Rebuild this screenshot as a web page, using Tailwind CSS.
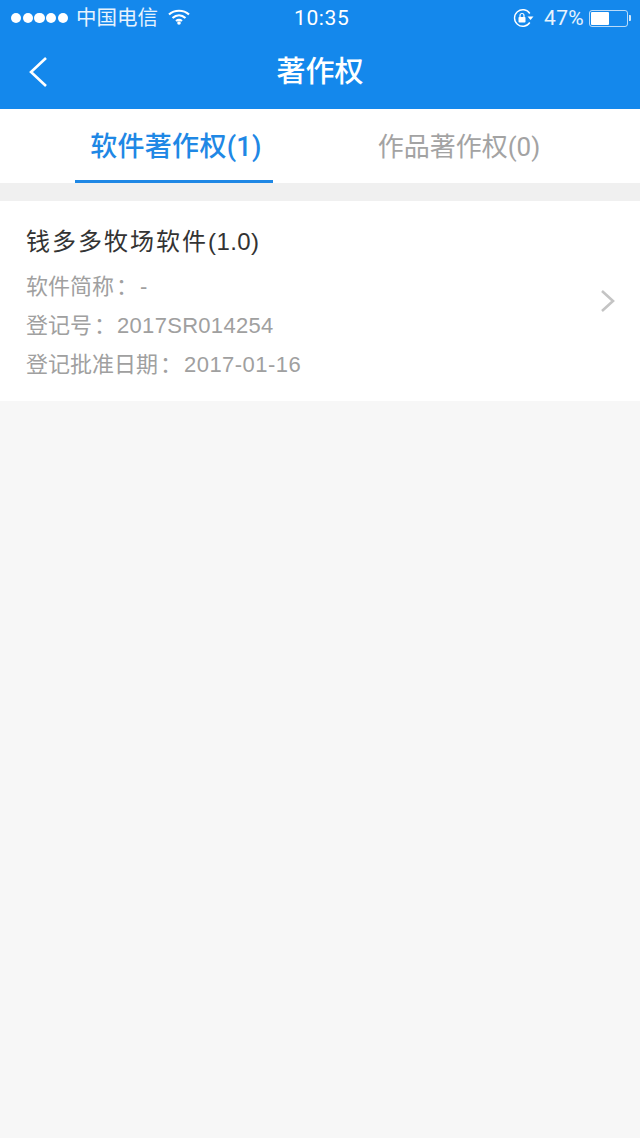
<!DOCTYPE html>
<html lang="zh-CN">
<head>
    <meta charset="UTF-8">
    <meta name="viewport" content="width=device-width, initial-scale=1.0">
    <title>著作权</title>
    <script src="https://cdn.jsdelivr.net/npm/@tailwindcss/browser@4"></script>
</head>
<body class="bg-[#f7f7f7] h-[1138px] overflow-hidden font-['Liberation_Sans','Noto_Sans_CJK_SC',sans-serif]">
    <!-- status bar + nav -->
    <header class="bg-[#1488ec] h-[109px] text-white">
        <div class="h-[36px] flex items-center justify-between pl-[11px] pr-[9px] relative">
            <div class="flex items-center">
                <div class="flex gap-[1.5px]">
                    <span class="w-[10.2px] h-[10.2px] rounded-full bg-white"></span>
                    <span class="w-[10.2px] h-[10.2px] rounded-full bg-white"></span>
                    <span class="w-[10.2px] h-[10.2px] rounded-full bg-white"></span>
                    <span class="w-[10.2px] h-[10.2px] rounded-full bg-white"></span>
                    <span class="w-[10.2px] h-[10.2px] rounded-full bg-white"></span>
                </div>
                <span class="ml-[8px] text-[20.5px] leading-[24px] text-white/90">中国电信</span>
                <svg class="ml-[10px] -mt-[2px]" width="22" height="16" viewBox="0 0 22 16" fill="none" stroke="white" stroke-width="2.2">
                    <path d="M1 5.5C6.5 0.5 15.5 0.5 21 5.5"/>
                    <path d="M4.5 9C8.5 5.5 13.5 5.5 17.5 9"/>
                    <path d="M8 12C9.8 10.6 12.2 10.6 14 12"/>
                    <circle cx="11" cy="14" r="1.8" fill="white" stroke="none"/>
                </svg>
            </div>
            <span class="absolute left-[294px] top-[5px] font-['Roboto',sans-serif] text-[21px] leading-[26px] tracking-[0.6px]">10:35</span>
            <div class="flex items-center font-['Roboto',sans-serif]">
                <svg width="21" height="20" viewBox="0 0 21 20" fill="none" stroke="white" stroke-width="1.4">
                    <path d="M16.8 5.5A8.3 8.3 0 1 0 16.8 14.5"/>
                    <path d="M14.5 8.5h6l-3 3.5z" fill="white" stroke="none"/>
                    <path d="M7 9V7.5a2 2 0 0 1 4 0V9" stroke-width="1.2"/>
                    <rect x="5.5" y="9" width="7" height="5.5" rx="0.8" fill="white" stroke="none"/>
                </svg>
                <span class="ml-[10px] text-[21px] leading-[26px] tracking-[0.3px] text-white/90">47%</span>
                <div class="ml-[5px] flex items-center">
                    <div class="w-[39px] h-[17px] rounded-[3px] border border-white/70 p-[1px]">
                        <div class="w-[18px] h-full bg-white rounded-[1px]"></div>
                    </div>
                    <div class="ml-[1px] w-[2px] h-[6px] bg-white/80 rounded-r-[1px]"></div>
                </div>
            </div>
        </div>
        <div class="h-[73px] flex items-center justify-center relative">
            <svg class="absolute left-[28px] top-[20px]" width="20" height="32" viewBox="0 0 20 32" fill="none" stroke="white" stroke-width="2.6">
                <path d="M18 2L3 16L18 30"/>
            </svg>
            <h1 class="font-['Noto_Sans_CJK_SC',sans-serif] text-[29px] leading-[36px] font-medium -mt-[8px]">著作权</h1>
        </div>
    </header>

    <!-- tabs -->
    <nav class="bg-white h-[74px] flex pl-[75px] gap-[87px] font-['Roboto','Noto_Sans_CJK_SC',sans-serif]">
        <div class="w-[198px] h-full pl-[4px] border-b-[3px] border-[#1f88e5] text-center text-[#1f88e5] text-[27px] leading-[76px] tracking-[0.3px] font-medium whitespace-nowrap">软件著作权(1)</div>
        <div class="w-[198px] h-full text-center text-[#a3a3a3] text-[26px] leading-[76px] whitespace-nowrap">作品著作权(0)</div>
    </nav>
    <div class="h-[18px] bg-[#f0f0f0]"></div>

    <!-- item -->
    <section class="bg-white h-[200px] pl-[26px] pr-[24px] flex items-center justify-between">
        <div class="pt-[5px]">
            <div class="h-[34px] text-[#333333] text-[24px] leading-[34px] tracking-[2px]">钱多多牧场软件<span class="tracking-[0.4px]">(1.0)</span></div>
            <div class="mt-[6px] h-[39px] text-[#a0a0a0] text-[22px] leading-[39px]">软件简称<span class="ml-[2px] font-['Noto_Sans_CJK_TC',sans-serif]">：</span><span class="ml-[2px]">-</span></div>
            <div class="h-[39px] text-[#a0a0a0] text-[22px] leading-[39px]">登记号<span class="ml-[2px] font-['Noto_Sans_CJK_TC',sans-serif]">：</span><span class="ml-[1px] tracking-[0.3px]">2017SR014254</span></div>
            <div class="h-[39px] text-[#a0a0a0] text-[22px] leading-[39px]">登记批准日期<span class="ml-[2px] font-['Noto_Sans_CJK_TC',sans-serif]">：</span><span class="ml-[2px] tracking-[0.45px]">2017-01-16</span></div>
        </div>
        <svg width="16" height="24" viewBox="0 0 16 24" fill="none" stroke="#c4c4c4" stroke-width="2.6">
            <path d="M2 2L13 12L2 22"/>
        </svg>
    </section>
</body>
</html>
